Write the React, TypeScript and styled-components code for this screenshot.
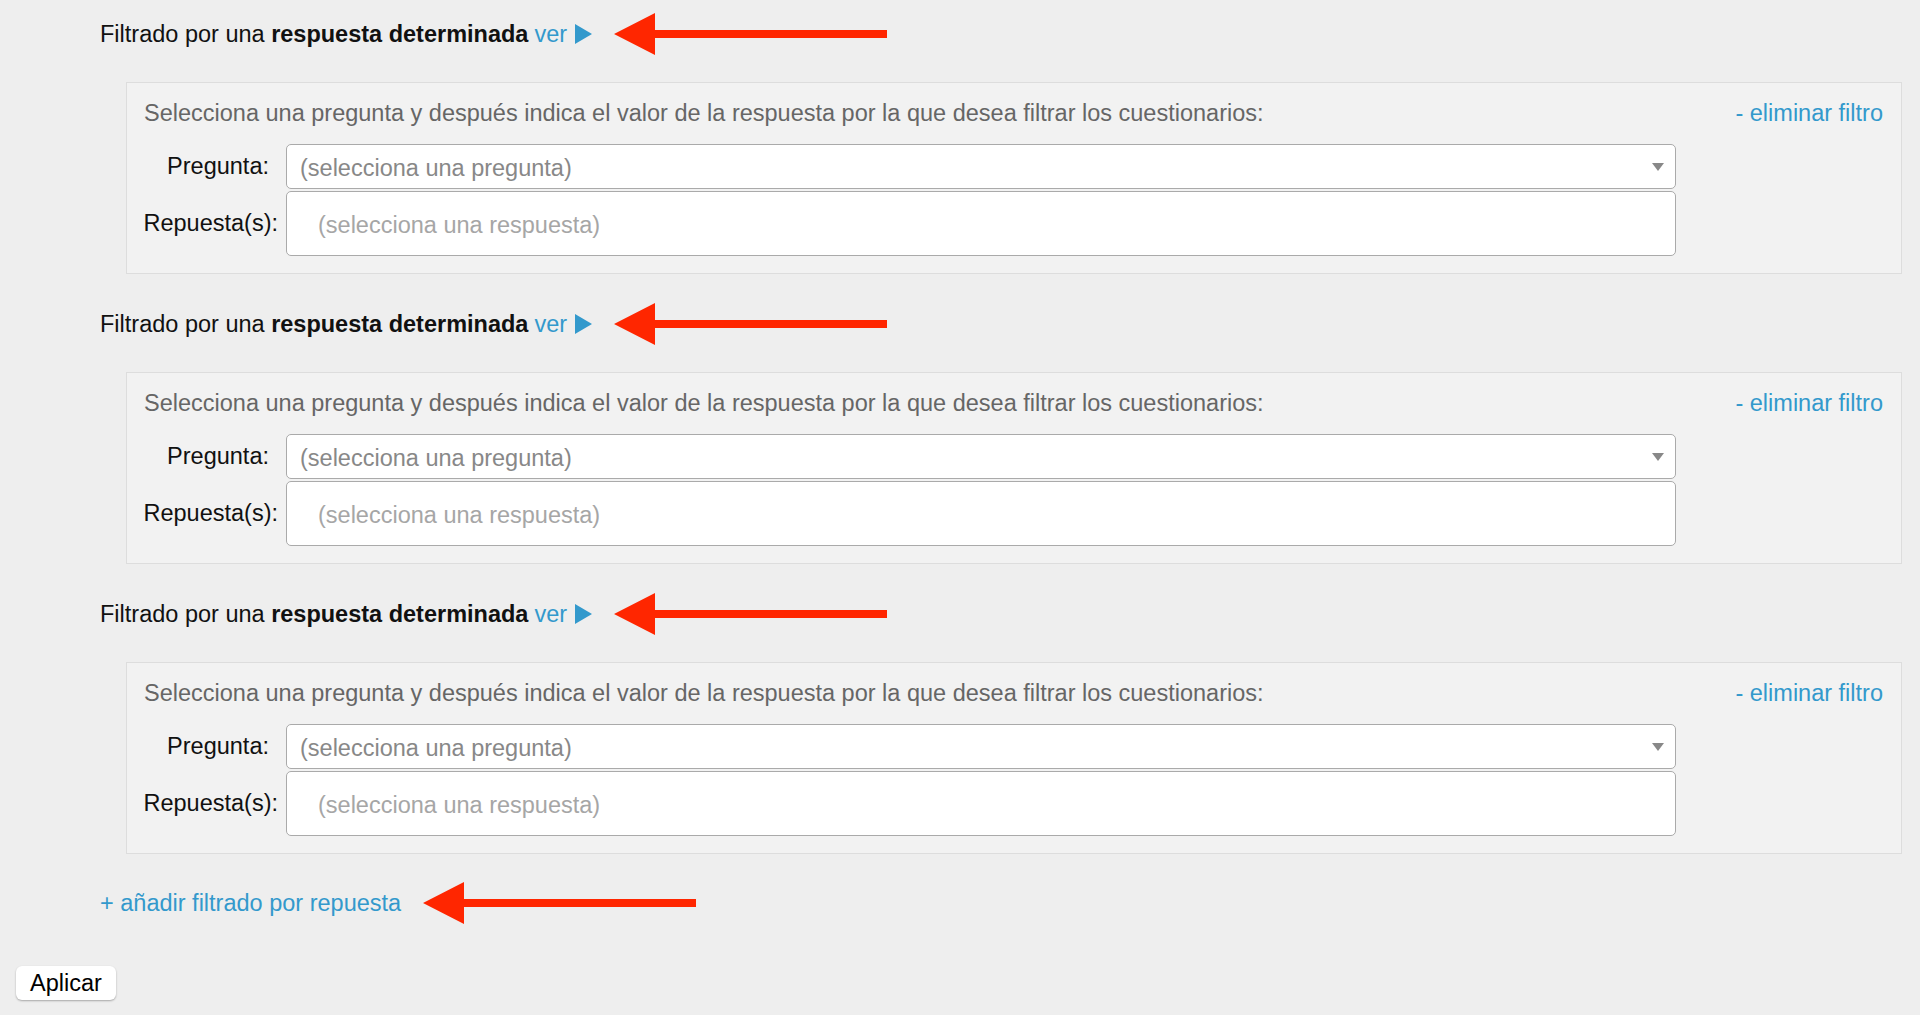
import styled, { createGlobalStyle } from "styled-components";

const GlobalStyle = createGlobalStyle`
  html, body {
    margin: 0;
    padding: 0;
    background: #eeeeee;
    font-family: "Liberation Sans", Arial, Helvetica, sans-serif;
    color: #111;
  }
`;

const Page = styled.div`
  padding: 20px 18px 15px 0;
  min-height: 1015px;
  box-sizing: border-box;
`;

const FilterHeading = styled.div<{ $first?: boolean }>`
  display: flex;
  align-items: center;
  margin: ${(p) => (p.$first ? "0" : "36px")} 0 0 100px;
  height: 28px;
  font-size: 23.5px;
  line-height: 28px;
  white-space: pre;
`;

const Strong = styled.b`
  font-weight: 700;
`;

const Link = styled.a`
  color: #3399cc;
  text-decoration: none;
  cursor: pointer;
`;

const Toggle = styled.span`
  display: inline-flex;
  align-items: center;
  gap: 8px;
  margin-left: 6px;
`;

const Callout = styled.svg<{ $gap?: number }>`
  margin-left: ${(p) => p.$gap ?? 22}px;
  flex: none;
`;

const FilterBox = styled.div`
  margin: 34px 0 0 126px;
  padding: 17px 18px 17px 17px;
  background: #f2f2f2;
  border: 1px solid #dddddd;
`;

const BoxTop = styled.div`
  display: flex;
  justify-content: space-between;
  font-size: 23.5px;
  line-height: 26px;
  color: #666;
  margin-bottom: 18px;
`;

const FieldGrid = styled.div`
  display: grid;
  grid-template-columns: 142px 1390px;
  row-gap: 2px;
  align-items: center;
`;

const Label = styled.label<{ $inset?: number }>`
  justify-self: end;
  padding-right: ${(p) => p.$inset ?? 8}px;
  font-size: 23.5px;
  color: #111;
  white-space: nowrap;
`;

const Select = styled.div`
  position: relative;
  height: 45px;
  box-sizing: border-box;
  border: 1px solid #aaaaaa;
  border-radius: 5px;
  background: #fff;
  display: flex;
  align-items: center;
  padding: 4px 0 0 13px;
  font-size: 23.5px;
  color: #888;
`;

const Caret = styled.span`
  position: absolute;
  right: 11px;
  top: 18px;
  width: 0;
  height: 0;
  border-left: 6.5px solid transparent;
  border-right: 6.5px solid transparent;
  border-top: 8px solid #888;
`;

const MultiInput = styled.div`
  height: 65px;
  box-sizing: border-box;
  border: 1px solid #aaaaaa;
  border-radius: 5px;
  background: #fff;
  display: flex;
  align-items: center;
  padding: 4px 0 0 31px;
  font-size: 23.5px;
  color: #a6a6a6;
`;

const AddLink = styled(Link)`
  display: flex;
  align-items: center;
  margin: 35px 0 0 100px;
  height: 28px;
  font-size: 23.5px;
  line-height: 28px;
`;

const Apply = styled.button`
  display: block;
  margin: 49px 0 0 16px;
  width: 100px;
  height: 34px;
  padding: 0;
  background: #fff;
  border: none;
  border-radius: 6px;
  box-shadow: 0 1px 2px rgba(0, 0, 0, 0.3);
  font-family: inherit;
  font-size: 23.5px;
  color: #000;
`;

function RedArrow({ gap }: { gap?: number }) {
  return (
    <Callout $gap={gap} width="273" height="42" viewBox="0 0 273 42">
      <polygon points="0,21 41,0 41,17 273,17 273,25 41,25 41,42" fill="#ff2600" />
    </Callout>
  );
}

function PlayIcon() {
  return (
    <svg width="17" height="20" viewBox="0 0 17 20">
      <polygon points="0,0 17,10 0,20" fill="#3399cc" />
    </svg>
  );
}

function AnswerFilter({ first }: { first?: boolean }) {
  return (
    <>
      <FilterHeading $first={first}>
        Filtrado por una <Strong>respuesta determinada</Strong>
        <Toggle>
          <Link>ver</Link>
          <PlayIcon />
        </Toggle>
        <RedArrow />
      </FilterHeading>
      <FilterBox>
        <BoxTop>
          <span>
            Selecciona una pregunta y después indica el valor de la respuesta por la que desea filtrar los
            cuestionarios:
          </span>
          <Link>- eliminar filtro</Link>
        </BoxTop>
        <FieldGrid>
          <Label $inset={17}>Pregunta:</Label>
          <Select>
            (selecciona una pregunta)
            <Caret />
          </Select>
          <Label>Repuesta(s):</Label>
          <MultiInput>(selecciona una respuesta)</MultiInput>
        </FieldGrid>
      </FilterBox>
    </>
  );
}

export default function App() {
  return (
    <>
      <GlobalStyle />
      <Page>
        <AnswerFilter first />
        <AnswerFilter />
        <AnswerFilter />
        <AddLink>
          + añadir filtrado por repuesta
          <RedArrow gap={22} />
        </AddLink>
        <Apply>Aplicar</Apply>
      </Page>
    </>
  );
}
